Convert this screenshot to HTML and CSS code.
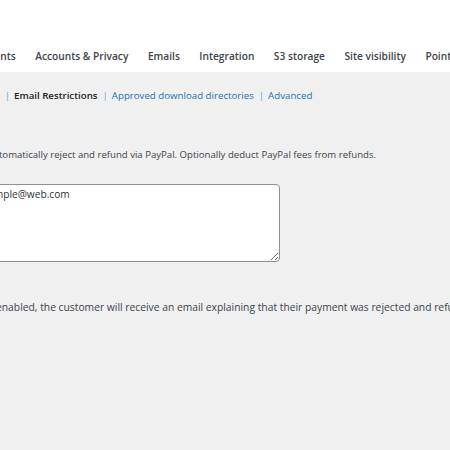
FILE: index.html
```html
<!DOCTYPE html>
<html lang="en">
<head>
  <meta charset="UTF-8">
  <meta name="viewport" content="width=device-width, initial-scale=1.0">
  <title>Settings</title>
  <link rel="stylesheet" href="styles.css">
</head>
<body>
  <div class="wrap">
    <header class="topbar">
      <nav class="tabs">
        <a href="#">Payments</a>
        <a href="#">Accounts &amp; Privacy</a>
        <a href="#">Emails</a>
        <a href="#">Integration</a>
        <a href="#">S3 storage</a>
        <a href="#">Site visibility</a>
        <a href="#">Points</a>
      </nav>
    </header>

    <ul class="subsubsub">
      <li><a href="#">General</a><span class="sep">|</span></li>
      <li><a href="#" class="current">Email Restrictions</a><span class="sep">|</span></li>
      <li><a href="#">Approved download directories</a><span class="sep">|</span></li>
      <li><a href="#">Advanced</a></li>
    </ul>

    <div class="form-table">
      <div class="row row-refund">
        <div class="th">Reject &amp; refund</div>
        <div class="td">
          <label class="check"><input type="checkbox"> Automatically reject and refund via PayPal. Optionally deduct PayPal fees from refunds.</label>
        </div>
      </div>
      <div class="row row-emails">
        <div class="th">Blocked emails</div>
        <div class="td">
          <textarea rows="4">example@web.com</textarea>
        </div>
      </div>
      <div class="row row-notify">
        <div class="th">Notify customer</div>
        <div class="td">
          <label class="check check-lg"><input type="checkbox"> If enabled, the customer will receive an email explaining that their payment was rejected and refunded.</label>
        </div>
      </div>
    </div>
  </div>
</body>
</html>
```
FILE: styles.css
```css
* { margin:0; padding:0; box-sizing:border-box; }
html, body { height:100%; }
body {
  background:#f0f0f1;
  color:#3c434a;
  font-family:'Open Sans', 'Noto Sans', sans-serif;
  font-size:9.6px;
  overflow:hidden;
  white-space:nowrap;
}
a { text-decoration:none; }

.wrap { margin-left:-210px; }

/* top tab bar */
.topbar {
  height:72px;
  background:#fff;
  display:flex;
  align-items:flex-end;
  padding-left:177px;
}
.tabs { display:flex; gap:19.5px; }
.tabs a {
  color:#3c434a;
  font-size:10.2px;
  font-weight:600;
  line-height:14px;
  padding-bottom:9px;
}

/* sub navigation */
.subsubsub {
  list-style:none;
  display:flex;
  margin-top:17px;
  padding-left:174px;
  font-size:9.7px;
  line-height:14px;
}
.subsubsub a { color:#2271b1; }
.subsubsub a.current { color:#1d2327; font-weight:600; }
.subsubsub .sep { color:#72a4d6; margin:0 4px 0 5px; }

/* settings rows */
.form-table { margin-top:45px; }
.row { display:grid; grid-template-columns:180px 1fr; }
.th { font-weight:600; color:#1d2327; line-height:14px; }
.td { line-height:14px; }
.row-emails { margin-top:22px; }
.row-notify { margin-top:38px; }

.check { display:flex; align-items:center; }
.check-lg { font-size:10.3px; }
.check input {
  width:12px; height:12px;
  margin-right:5px;
  flex-shrink:0;
}

textarea {
  display:block;
  width:310px;
  height:78px;
  padding:2px 6px;
  border:1px solid #8c8f94;
  border-radius:4px;
  background:#fff;
  color:#2c3338;
  font-family:inherit;
  font-size:10.2px;
  line-height:14px;
  resize:vertical;
}
```
